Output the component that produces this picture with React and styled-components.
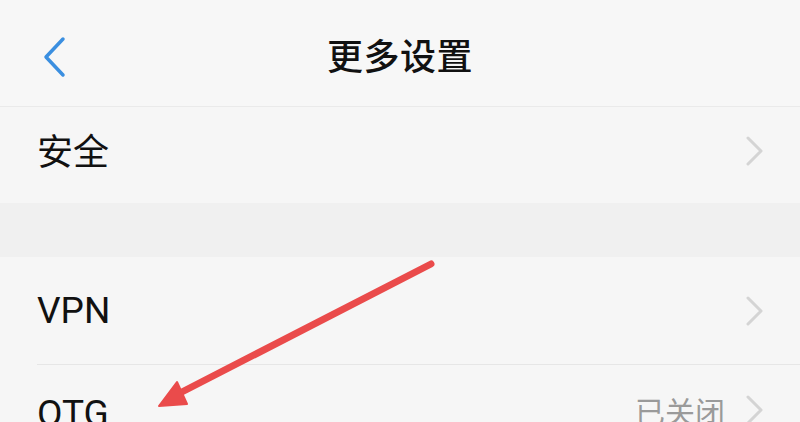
import React from "react";
import styled, { createGlobalStyle } from "styled-components";

const Global = createGlobalStyle`
  html, body { margin: 0; padding: 0; background: #f6f6f6; }
  body { font-family: Roboto, "Noto Sans CJK SC", sans-serif; color: #111; }
`;

const Page = styled.div`
  position: relative;
  width: 800px;
  height: 422px;
  overflow: hidden;
  background: #f6f6f6;
`;

const Header = styled.header`
  position: relative;
  height: 106px;
  display: flex;
  align-items: center;
  justify-content: center;
  background: #f7f7f7;
  border-bottom: 1px solid #eaeaea;
`;

const BackButton = styled.button`
  position: absolute;
  left: 38px;
  top: 33px;
  width: 32px;
  height: 48px;
  padding: 0;
  border: 0;
  background: none;
  display: flex;
  align-items: center;
  justify-content: center;
`;

const Title = styled.h1`
  margin: 0;
  font-family: "Noto Sans CJK SC", sans-serif;
  font-size: 36px;
  font-weight: 500;
  letter-spacing: 0.5px;
  color: #111;
  line-height: 1;
  transform: translateY(1px);
`;

const Group = styled.section`
  background: #f6f6f6;
`;

const Gap = styled.div`
  height: 54px;
  background: #f0f0f0;
`;

const Row = styled.div`
  height: ${(p) => p.$h}px;
  display: flex;
  align-items: ${(p) => (p.$top ? "flex-start" : "center")};
  padding: ${(p) => (p.$top ? "30px" : "0")} 35px ${(p) => p.$pb || 0}px 37px;
  box-sizing: border-box;
`;

const Divider = styled.div`
  height: 1px;
  margin-left: 37px;
  background: #e6e6e6;
`;

const Label = styled.span`
  flex: 1;
  font-family: ${(p) =>
    p.$latin ? 'Roboto, "Noto Sans CJK SC", sans-serif' : '"Noto Sans CJK SC", sans-serif'};
  font-size: ${(p) => (p.$latin ? "37px" : "36px")};
  line-height: 1;
  color: #111;
  margin-top: ${(p) => (p.$latin ? 0 : -4)}px;
`;

const Value = styled.span`
  font-family: "Noto Sans CJK SC", sans-serif;
  font-size: 30px;
  line-height: 1;
  color: #9a9a9a;
  margin-right: 20px;
`;

const Chevron = () => (
  <svg width="20" height="30" viewBox="0 0 20 30">
    <path d="M3 2 L16 15 L3 28" fill="none" stroke="#d4d4d4" strokeWidth="3" strokeLinecap="round" strokeLinejoin="round" />
  </svg>
);

const Overlay = styled.svg`
  position: absolute;
  left: 0;
  top: 0;
  pointer-events: none;
`;

export default function App() {
  return (
    <Page>
      <Global />
      <Header>
        <BackButton aria-label="返回">
          <svg width="26" height="44" viewBox="0 0 26 44">
            <path d="M22 4 L5 22 L22 40" fill="none" stroke="#3b8fe0" strokeWidth="3.5" strokeLinecap="round" strokeLinejoin="round" />
          </svg>
        </BackButton>
        <Title>更多设置</Title>
      </Header>
      <Group>
        <Row $h={96} $pb={8}>
          <Label>安全</Label>
          <Chevron />
        </Row>
      </Group>
      <Gap />
      <Group>
        <Row $h={107}>
          <Label $latin>VPN</Label>
          <Chevron />
        </Row>
        <Divider />
        <Row $h={100} $top>
          <Label $latin>OTG</Label>
          <Value>已关闭</Value>
          <Chevron />
        </Row>
      </Group>
      <Overlay width="800" height="422" viewBox="0 0 800 422">
        <line x1="431" y1="264" x2="178" y2="394" stroke="#ea4b4b" strokeWidth="7" strokeLinecap="round" />
        <polygon points="159,406 177,382 187,404" fill="#ea4b4b" stroke="#ea4b4b" strokeWidth="2" strokeLinejoin="round" />
      </Overlay>
    </Page>
  );
}
